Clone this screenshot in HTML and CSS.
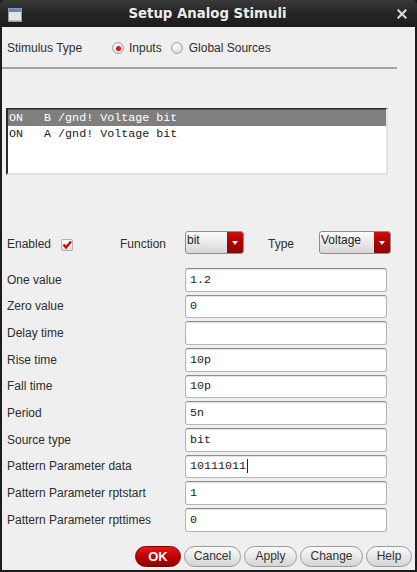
FILE: index.html
```html
<!DOCTYPE html>
<html>
<head>
<meta charset="utf-8">
<title>Setup Analog Stimuli</title>
<link rel="stylesheet" href="styles.css">
</head>
<body>
<div class="window">
  <div class="titlebar">
    <svg class="win-icon" width="14" height="14" viewBox="0 0 14 14">
      <rect x="0.5" y="0.5" width="13" height="13" fill="#e4e4e4" stroke="#9a9a9a"/>
      <rect x="1" y="1" width="12" height="3" fill="#5b86c8"/>
      <rect x="1" y="12" width="12" height="1" fill="#c0c0c0"/>
    </svg>
    <div class="title">Setup Analog Stimuli</div>
    <svg class="close" width="10" height="10" viewBox="0 0 10 10">
      <path d="M1.5 1.5 L8.5 8.5 M8.5 1.5 L1.5 8.5" stroke="#d6d6d6" stroke-width="2.2" stroke-linecap="square"/>
    </svg>
  </div>
  <div class="content">
    <div class="stim-row">
      <span class="stim-label">Stimulus Type</span>
      <span class="radio on"></span><span class="radio-text">Inputs</span>
      <span class="radio second"></span><span class="radio-text">Global Sources</span>
    </div>
    <div class="separator"></div>
    <div class="listbox">
      <div class="list-row selected">ON   B /gnd! Voltage bit</div>
      <div class="list-row">ON   A /gnd! Voltage bit</div>
    </div>
    <div class="enabled-row">
      <span class="lbl">Enabled</span>
      <span class="check-cell">
        <span class="checkbox">
          <svg width="12" height="12" viewBox="0 0 12 12"><path d="M2.5 5.5 L5 8.5 L10 2.5" fill="none" stroke="#d40000" stroke-width="2.2"/></svg>
        </span>
      </span>
      <span class="lbl">Function</span>
      <span class="dropdown"><span class="dd-text">bit</span><span class="dd-btn"></span></span>
      <span></span>
      <span class="lbl">Type</span>
      <span class="dropdown"><span class="dd-text">Voltage</span><span class="dd-btn"></span></span>
    </div>
    <div class="form">
      <span class="lbl">One value</span><span class="field">1.2</span>
      <span class="lbl">Zero value</span><span class="field">0</span>
      <span class="lbl">Delay time</span><span class="field"></span>
      <span class="lbl">Rise time</span><span class="field">10p</span>
      <span class="lbl">Fall time</span><span class="field">10p</span>
      <span class="lbl">Period</span><span class="field">5n</span>
      <span class="lbl">Source type</span><span class="field">bit</span>
      <span class="lbl">Pattern Parameter data</span><span class="field">10111011<span class="caret"></span></span>
      <span class="lbl">Pattern Parameter rptstart</span><span class="field">1</span>
      <span class="lbl">Pattern Parameter rpttimes</span><span class="field">0</span>
    </div>
    <div class="buttons">
      <span class="btn ok">OK</span>
      <span class="btn w-cancel">Cancel</span>
      <span class="btn w-apply">Apply</span>
      <span class="btn w-change">Change</span>
      <span class="btn w-help">Help</span>
    </div>
  </div>
</div>
</body>
</html>
```
FILE: styles.css
```css
html, body {
  margin: 0;
  padding: 0;
  background: #1b1b1b;
}
.window {
  width: 417px;
  height: 572px;
  display: flex;
  flex-direction: column;
  background: #1c1c1c;
  border-radius: 5px 5px 0 0;
  overflow: hidden;
  font-family: "Liberation Sans", Arial, sans-serif;
  font-size: 12px;
  color: #2e2e2e;
}
.titlebar {
  height: 27px;
  flex: none;
  display: flex;
  align-items: center;
  position: relative;
  background: linear-gradient(#3a3a3a, #262626 45%, #1c1c1c);
}
.win-icon {
  margin-left: 8px;
  margin-top: 2px;
}
.title {
  flex: 1;
  text-align: center;
  font-family: "DejaVu Sans", sans-serif;
  font-weight: bold;
  font-size: 13.3px;
  color: #ececec;
  margin-left: -14px;
  margin-right: -10px;
}
.close {
  margin-right: 10px;
  margin-top: 1px;
}
.content {
  flex: 1;
  margin: 0 2px 2px 2px;
  background: #efefef;
  display: flex;
  flex-direction: column;
}
.stim-row {
  height: 38px;
  padding-top: 2px;
  padding-left: 5px;
  display: flex;
  align-items: center;
}
.stim-label {
  width: 105px;
}
.radio {
  width: 12px;
  height: 12px;
  box-sizing: border-box;
  border-radius: 50%;
  border: 1px solid #a8a8a8;
  background: radial-gradient(circle at 40% 35%, #ffffff, #dcdcdc 70%, #c8c8c8);
  margin-right: 5px;
  position: relative;
}
.radio.on::after {
  content: "";
  position: absolute;
  left: 2.5px;
  top: 2.5px;
  width: 5px;
  height: 5px;
  border-radius: 50%;
  background: radial-gradient(circle at 40% 40%, #ff2020, #b00000);
}
.radio.second {
  margin-left: 9px;
  margin-right: 6px;
}
.separator {
  height: 2px;
  margin-right: 18px;
  background: #a4a4a4;
}
.listbox {
  margin: 39px 0 0 4px;
  width: 382px;
  height: 67px;
  box-sizing: border-box;
  background: #ffffff;
  border-top: 1px solid #2a2a2a;
  border-left: 2px solid #2a2a2a;
  border-right: 2px solid #e2e2e2;
  border-bottom: 2px solid #e2e2e2;
}
.list-row {
  height: 17px;
  line-height: 17px;
  padding-left: 1px;
  font-family: "Liberation Mono", "Courier New", monospace;
  font-size: 11.7px;
  white-space: pre;
  color: #1a1a1a;
}
.list-row.selected {
  background: #7f7f7f;
  color: #ffffff;
  border-top: 1px solid #555;
  height: 16px;
  line-height: 16px;
}
.enabled-row {
  margin-top: 56px;
  padding-left: 5px;
  height: 23px;
  display: grid;
  grid-template-columns: 54px 59px 65px 59px 24px 51px 72px;
  align-items: center;
}
.lbl {
  white-space: nowrap;
}
.enabled-row .lbl {
  padding-top: 2px;
}
.check-cell {
  display: flex;
  align-items: center;
  padding-top: 4px;
}
.checkbox {
  width: 12px;
  height: 12px;
  box-sizing: border-box;
  border: 1px solid #b0b0b0;
  border-radius: 2px;
  background: linear-gradient(#ffffff, #dedede);
  display: flex;
  align-items: center;
  justify-content: center;
}
.checkbox svg {
  flex: none;
}
.dropdown {
  height: 23px;
  box-sizing: border-box;
  border: 1px solid #8e8e8e;
  border-radius: 3px;
  display: flex;
  overflow: hidden;
  background: linear-gradient(#fbfbfb, #e6e6e6 60%, #d6d6d6);
}
.dd-text {
  flex: 1;
  padding-left: 1px;
  line-height: 17px;
  color: #222;
}
.dd-btn {
  width: 16px;
  background: linear-gradient(#d40c0c, #b00000 50%, #8e0000);
  position: relative;
}
.dd-btn::after {
  content: "";
  position: absolute;
  left: 5px;
  top: 9px;
  border-left: 3px solid transparent;
  border-right: 3px solid transparent;
  border-top: 4px solid #ffffff;
}
.form {
  margin-top: 14px;
  padding-left: 5px;
  display: grid;
  grid-template-columns: 178px 202px;
  grid-auto-rows: 23.67px;
  row-gap: 3px;
  align-items: center;
}
.field {
  height: 100%;
  box-sizing: border-box;
  background: #ffffff;
  border: 1px solid #b4b4b4;
  border-top-color: #8c8c8c;
  border-radius: 3px;
  box-shadow: inset 0 1px 1px rgba(0,0,0,0.12);
  padding-left: 4px;
  display: flex;
  align-items: center;
  font-family: "Liberation Mono", "Courier New", monospace;
  font-size: 11.7px;
  color: #1a1a1a;
}
.caret {
  display: inline-block;
  width: 1px;
  height: 14px;
  background: #222;
  margin-left: 1px;
}
.buttons {
  margin-top: 14px;
  display: flex;
  justify-content: flex-end;
  gap: 3px;
  padding-right: 3px;
}
.btn {
  height: 21px;
  box-sizing: border-box;
  border: 1px solid #9a9a9a;
  border-radius: 11px;
  background: linear-gradient(#fafafa, #e8e8e8 50%, #d4d4d4);
  display: flex;
  align-items: center;
  justify-content: center;
  color: #333;
  font-size: 12px;
}
.btn.ok {
  width: 46px;
  border-color: #7a0000;
  background: linear-gradient(#e41a1a, #c00000 50%, #900000);
  color: #ffffff;
  font-weight: bold;
  font-size: 13px;
}
.w-cancel { width: 57px; }
.w-apply { width: 53px; }
.w-change { width: 63px; }
.w-help { width: 46px; }
```
